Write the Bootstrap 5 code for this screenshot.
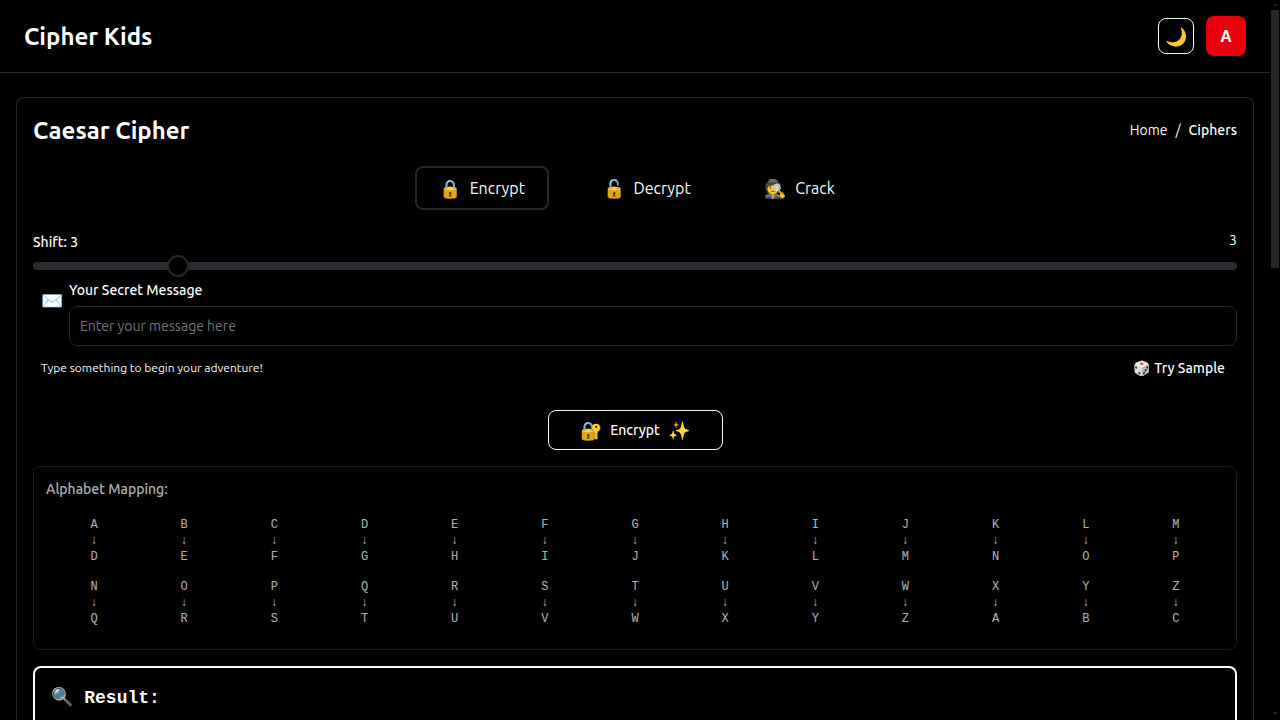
<!DOCTYPE html>
<html lang="en" data-bs-theme="dark">
<head>
<meta charset="utf-8">
<meta name="viewport" content="width=device-width, initial-scale=1">
<title>Cipher Kids</title>
<link href="https://cdn.jsdelivr.net/npm/bootstrap@5.3.0/dist/css/bootstrap.min.css" rel="stylesheet">
<style>
  :root { --line: #27272a; }
  body { background: #000; color: #fafafa; font-family: Ubuntu, "Open Sans", sans-serif; font-size: 14px; line-height: 20px; height: 720px; overflow: hidden; }
  .page { width: 1270px; }
  .topbar { height: 73px; border-bottom: 1px solid var(--line); padding: 0 24px; }
  .tools { gap: 12px; }
  .title { font-size: 24px; font-weight: 600; line-height: 30px; margin: 0; padding-top: 2px; }
  .emoji { font-family: "Noto Color Emoji", sans-serif; font-weight: 400; font-size: 18px; }
  .theme-btn { width: 36px; height: 36px; border: 1px solid #fafafa; border-radius: 8px; background: #000; padding: 2px 0 0 1px; }
  .avatar { width: 40px; height: 40px; border-radius: 8px; background: #e7000b; color: #fff; font: bold 16px "Liberation Sans", sans-serif; padding-top: 1px; }
  .panel { margin: 24px 16px 0; height: 623px; border: 1px solid var(--line); border-bottom: 0; border-radius: 8px 8px 0 0; padding: 16px 16px 0; }
  .modes { margin-top: 20px; padding-left: 4px; }
  .mode { height: 44px; border: 2px solid transparent; border-radius: 8px; font-size: 16px; line-height: 24px; padding: 0 22px; }
  .mode .emoji { padding-top: 2px; }
  .mode.on { border-color: var(--line); }
  .mode.mid { margin: 0 26px 0 30px; }
  .med { font-weight: 500; }
  .shift { margin-top: 20px; height: 32px; }
  .shift .med { padding-top: 2px; }
  .track { height: 8px; border-radius: 4px; background: #2b2b2f; }
  .knob { width: 22px; height: 22px; border-radius: 50%; border: 2px solid var(--line); background: #000; top: -7px; transform: translateX(-50%); }
  .entry { margin-top: 10px; }
  .entry .emoji { width: 36px; padding: 11px 0 0 8px; }
  .message { height: 40px; border: 1px solid var(--line); border-radius: 8px; background: #000; color: #fff; padding: 0 10px; margin-top: 6px; font-size: 14px; width: 100%; display: block; }
  .message::placeholder { color: #757575; opacity: 1; }
  .hints { margin-top: 12px; padding: 0 12px 0 8px; }
  .hint { font-size: 12px; }
  .dice { margin-right: 1px; }
  .action { width: 175px; height: 40px; margin-top: 32px; border: 1px solid #fafafa; border-radius: 8px; background: #000; color: #fafafa; }
  .action .emoji { padding-top: 2px; }
  .action .lead-in { margin: 0 -1px 0 1px; }
  .action .lead-out { margin: 0 -1px 0 1px; }
  .mapping { height: 184px; margin-top: 16px; border: 1px solid var(--line); border-radius: 8px; padding: 12px; opacity: .7; }
  .letters { display: grid; grid-template-columns: repeat(13, 1fr); gap: 14px 8px; padding: 0 7px; margin-top: 18px; font: 12px/16px "Liberation Mono", monospace; text-align: center; }
  .result { margin-top: 16px; height: 54px; border: 2px solid #fff; border-bottom: 0; border-radius: 8px 8px 0 0; padding: 15px 16px 0; font: bold 18px/28px "Liberation Mono", monospace; color: #fff; }
  .scroller { width: 10px; height: 720px; }
  .thumb { width: 8px; height: 258px; background: var(--line); margin-top: 4px; }
</style>
</head>
<body>
<div class="d-flex">
  <div class="page flex-shrink-0">
    <header class="topbar d-flex align-items-center justify-content-between">
      <h1 class="title">Cipher Kids</h1>
      <div class="tools d-flex align-items-center">
        <button class="theme-btn d-flex align-items-center justify-content-center emoji" aria-label="Theme">🌙</button>
        <div class="avatar d-flex align-items-center justify-content-center">A</div>
      </div>
    </header>
    <main class="panel">
      <div class="d-flex justify-content-between align-items-center">
        <h2 class="title">Caesar Cipher</h2>
        <nav class="d-flex gap-2"><span>Home</span><span>/</span><span class="med">Ciphers</span></nav>
      </div>
      <div class="modes d-flex justify-content-center">
        <div class="mode on d-flex align-items-center gap-2"><span class="emoji">🔒</span><span>Encrypt</span></div>
        <div class="mode mid d-flex align-items-center gap-2"><span class="emoji">🔓</span><span>Decrypt</span></div>
        <div class="mode d-flex align-items-center gap-2"><span class="emoji">🕵️</span><span>Crack</span></div>
      </div>
      <div class="shift d-flex justify-content-between"><span class="med">Shift: 3</span><span>3</span></div>
      <div class="track position-relative"><div class="knob position-absolute" style="left:12.04%"></div></div>
      <div class="entry d-flex">
        <span class="emoji flex-shrink-0">✉️</span>
        <div class="flex-grow-1"><label class="med d-block" for="msg">Your Secret Message</label><input id="msg" class="message" placeholder="Enter your message here"></div>
      </div>
      <div class="hints d-flex justify-content-between"><span class="hint">Type something to begin your adventure!</span><span class="med"><span class="dice">🎲</span> Try Sample</span></div>
      <button class="action d-flex align-items-center justify-content-center gap-2 mx-auto"><span class="emoji lead-in">🔐</span><span class="med">Encrypt</span><span class="emoji lead-out">✨</span></button>
      <section class="mapping"><div class="med">Alphabet Mapping:</div><div class="letters"></div></section>
      <section class="result"><span class="emoji">🔍</span> Result:</section>
    </main>
  </div>
  <div class="scroller d-flex flex-column align-items-center">
    <svg width="8" height="6" viewBox="0 0 8 6"><path d="M2 6h5L4.500 3.500z" fill="#27272a"/></svg>
    <div class="thumb"></div>
    <svg class="mt-auto mb-1" width="8" height="4" viewBox="0 0 8 4"><path d="M2 0h5L4.500 3z" fill="#27272a"/></svg>
  </div>
</div>
<script src="https://cdn.jsdelivr.net/npm/bootstrap@5.3.0/dist/js/bootstrap.bundle.min.js"></script>
<script>
  const AZ = "ABCDEFGHIJKLMNOPQRSTUVWXYZ";
  document.querySelector(".letters").innerHTML = [...AZ].map((c, i) =>
    `<div>${c}<div>↓</div>${AZ[(i + 3) % 26]}</div>`).join("");
</script>
</body>
</html>
